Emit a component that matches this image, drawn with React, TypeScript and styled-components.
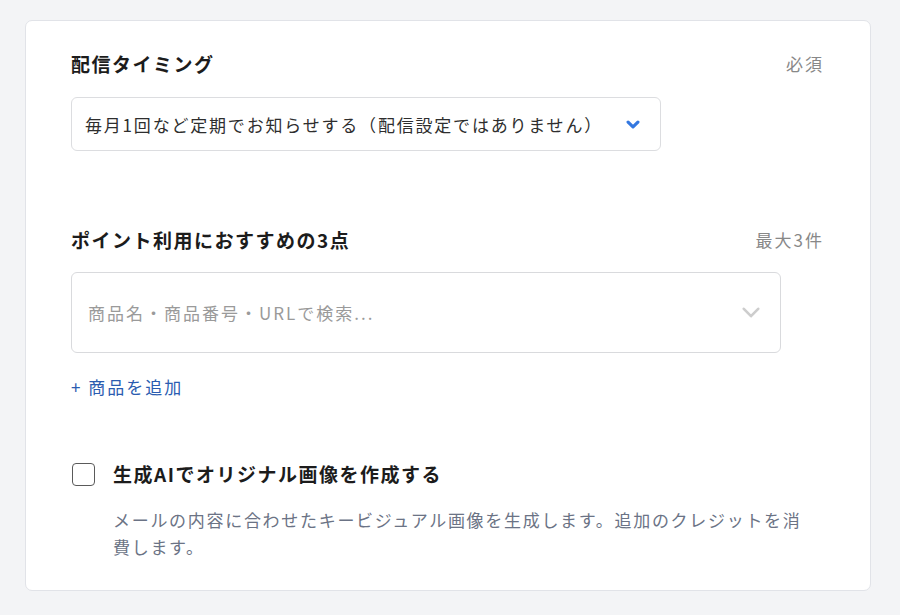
import React from "react";
import styled, { createGlobalStyle } from "styled-components";

const Global = createGlobalStyle`
  html, body { margin: 0; padding: 0; background: #f3f4f6; }
  body { font-family: "Noto Sans CJK JP", "Noto Sans", sans-serif; }
`;

const Page = styled.div`
  padding: 20px 0 0 25px;
  height: 615px;
  box-sizing: border-box;
`;

const Card = styled.div`
  width: 846px;
  height: 571px;
  box-sizing: border-box;
  background: #ffffff;
  border: 1px solid #e1e3e8;
  border-radius: 7px;
  padding: 30px 46px 0 45px;
  display: flex;
  flex-direction: column;
`;

const HeaderRow = styled.div<{ $top?: number }>`
  display: flex;
  justify-content: space-between;
  align-items: center;
  height: 26px;
  margin-top: ${(p) => p.$top ?? 0}px;
`;

const Title = styled.div`
  font-size: 19px;
  font-weight: 700;
  color: #1c1c1c;
  letter-spacing: 1.5px;
  line-height: 26px;
`;

const Note = styled.div`
  font-size: 17px;
  color: #888888;
  letter-spacing: 2px;
  line-height: 26px;
`;

const Select = styled.div`
  margin-top: 20px;
  width: 590px;
  height: 54px;
  box-sizing: border-box;
  border: 1px solid #dcdde0;
  border-radius: 6px;
  padding: 0 20px 0 13px;
  display: flex;
  align-items: center;
  justify-content: space-between;
  font-size: 17px;
  color: #2e2e2e;
  letter-spacing: 1.8px;
`;

const Search = styled.div`
  margin-top: 19px;
  width: 710px;
  height: 81px;
  box-sizing: border-box;
  border: 1px solid #d9dadd;
  border-radius: 6px;
  padding: 0 20px 0 16px;
  display: flex;
  align-items: center;
  justify-content: space-between;
  font-size: 17px;
  color: #9a9a9a;
  letter-spacing: 2px;
`;

const AddLink = styled.a`
  margin-top: 22px;
  font-size: 17px;
  line-height: 24px;
  color: #2b5cb0;
  letter-spacing: 2px;
  text-decoration: none;
  align-self: flex-start;
`;

const CheckRow = styled.label`
  margin-top: 62px;
  display: flex;
  align-items: center;
  gap: 18px;
  height: 26px;
`;

const Box = styled.span`
  width: 23px;
  height: 23px;
  box-sizing: border-box;
  border: 1.5px solid #5a5a5a;
  border-radius: 4px;
  margin-left: 1px;
`;

const Desc = styled.p`
  margin: 19px 0 0 42px;
  max-width: 700px;
  font-size: 17px;
  line-height: 27px;
  color: #6b7385;
  letter-spacing: 1.7px;
`;

const Chevron = ({ color, w, h, sw }: { color: string; w: number; h: number; sw: number }) => (
  <svg width={w} height={h} viewBox={`0 0 ${w} ${h}`} fill="none">
    <path
      d={`M${sw / 2 + 0.5} ${sw / 2 + 0.5} L${w / 2} ${h - sw / 2 - 0.5} L${w - sw / 2 - 0.5} ${sw / 2 + 0.5}`}
      stroke={color}
      strokeWidth={sw}
      strokeLinecap="round"
      strokeLinejoin="round"
    />
  </svg>
);

export default function App() {
  return (
    <>
      <Global />
      <Page>
        <Card>
          <HeaderRow>
            <Title>配信タイミング</Title>
            <Note>必須</Note>
          </HeaderRow>
          <Select>
            <span>毎月1回など定期でお知らせする（配信設定ではありません）</span>
            <Chevron color="#3478e0" w={14} h={9} sw={3.2} />
          </Select>

          <HeaderRow $top={76}>
            <Title>ポイント利用におすすめの3点</Title>
            <Note>最大3件</Note>
          </HeaderRow>
          <Search>
            <span>商品名・商品番号・URLで検索...</span>
            <Chevron color="#cdcdcd" w={18} h={11} sw={2.6} />
          </Search>
          <AddLink href="#">+ 商品を追加</AddLink>

          <CheckRow>
            <Box />
            <Title>生成AIでオリジナル画像を作成する</Title>
          </CheckRow>
          <Desc>
            メールの内容に合わせたキービジュアル画像を生成します。追加のクレジットを消費します。
          </Desc>
        </Card>
      </Page>
    </>
  );
}
